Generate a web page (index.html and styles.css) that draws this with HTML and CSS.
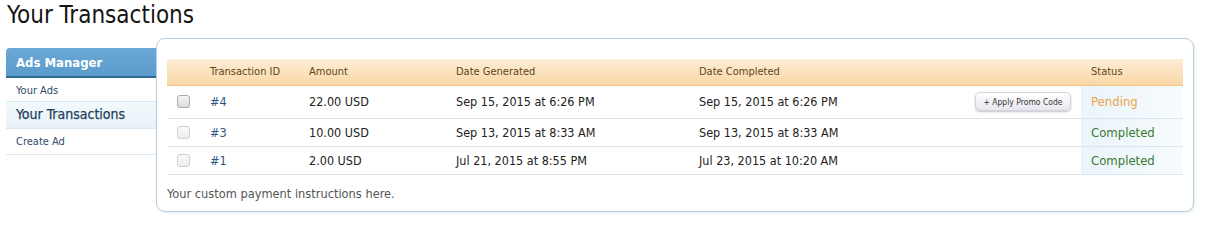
FILE: index.html
```html
<!DOCTYPE html>
<html>
<head>
<meta charset="utf-8">
<link rel="stylesheet" href="styles.css">
</head>
<body>
<h1 class="title">Your Transactions</h1>
<div class="layout">
  <nav class="sidebar">
    <div class="side-head">Ads Manager</div>
    <a class="side-link">Your Ads</a>
    <a class="side-link active">Your Transactions</a>
    <a class="side-link">Create Ad</a>
  </nav>
  <section class="panel">
    <table class="tx">
      <colgroup>
        <col class="c-check"><col class="c-id"><col class="c-amt"><col class="c-gen"><col class="c-comp"><col class="c-status">
      </colgroup>
      <thead>
        <tr><th></th><th>Transaction ID</th><th>Amount</th><th>Date Generated</th><th>Date Completed</th><th>Status</th></tr>
      </thead>
      <tbody>
        <tr class="r-tall">
          <td><span class="cb"></span></td>
          <td><a class="tid">#4</a></td>
          <td>22.00 USD</td>
          <td>Sep 15, 2015 at 6:26 PM</td>
          <td class="comp"><span>Sep 15, 2015 at 6:26 PM</span><button class="promo">+ Apply Promo Code</button></td>
          <td class="status pending">Pending</td>
        </tr>
        <tr>
          <td><span class="cb dis"></span></td>
          <td><a class="tid">#3</a></td>
          <td>10.00 USD</td>
          <td>Sep 13, 2015 at 8:33 AM</td>
          <td>Sep 13, 2015 at 8:33 AM</td>
          <td class="status done">Completed</td>
        </tr>
        <tr>
          <td><span class="cb dis"></span></td>
          <td><a class="tid">#1</a></td>
          <td>2.00 USD</td>
          <td>Jul 21, 2015 at 8:55 PM</td>
          <td>Jul 23, 2015 at 10:20 AM</td>
          <td class="status done">Completed</td>
        </tr>
      </tbody>
    </table>
    <p class="note">Your custom payment instructions here.</p>
  </section>
</div>
</body>
</html>
```

FILE: styles.css
```css
* { box-sizing: border-box; }
html, body { margin: 0; padding: 0; background: #fff; }
body {
  font-family: "DejaVu Sans Condensed", "DejaVu Sans", sans-serif;
  color: #222;
  width: 1205px;
  height: 221px;
  overflow: hidden;
}
.title {
  margin: 0;
  padding: 2px 0 0 7px;
  height: 38px;
  font-size: 24px;
  font-weight: normal;
  color: #151515;
  line-height: 26px;
}
.layout {
  display: flex;
  align-items: flex-start;
  padding-left: 6px;
}
.sidebar {
  width: 151px;
  margin-top: 10px;
  margin-right: -1px;
  display: flex;
  flex-direction: column;
}
.side-head {
  height: 30px;
  background: linear-gradient(#6aa8d6, #5b9bcb);
  border-bottom: 2px solid #2e6c92;
  border-radius: 4px 0 0 0;
  color: #fff;
  font-weight: bold;
  font-size: 13px;
  padding: 7px 0 0 10px;
}
.side-link {
  display: block;
  height: 24px;
  padding: 6px 0 0 10px;
  font-size: 11px;
  color: #2f4c6a;
  border-bottom: 1px solid #dbe9f2;
}
.side-link.active {
  height: 27px;
  padding-top: 4px;
  font-size: 14px;
  color: #243f5c;
  -webkit-text-stroke: 0.25px #243f5c;
  background: linear-gradient(#f3f9fc, #e8f3f9);
}
.side-link:last-child { height: 26px; }
.panel {
  position: relative;
  width: 1038px;
  height: 174px;
  border: 1px solid #b6cfdb;
  border-radius: 9px;
  background: #fff;
  padding: 20px 10px 0 10px;
  box-shadow: 1px 1px 2px rgba(150, 180, 200, 0.25);
}
.tx {
  width: 1016px;
  border-collapse: collapse;
  table-layout: fixed;
  font-size: 12.5px;
}
.c-check { width: 33px; }
.c-id { width: 99px; }
.c-amt { width: 147px; }
.c-gen { width: 243px; }
.c-comp { width: 392px; }
.c-status { width: 102px; }
.tx th {
  height: 26px;
  text-align: left;
  font-weight: normal;
  font-size: 11px;
  color: #5e4620;
  padding: 0 0 0 10px;
  background: linear-gradient(#fdedd6, #f9d7a6);
  border-bottom: 1px solid #efc58c;
}
.tx td {
  height: 28px;
  padding: 0 0 0 10px;
  border-bottom: 1px solid #d8e7ef;
  vertical-align: middle;
  white-space: nowrap;
}
.tx tr.r-tall td { height: 33px; }
.cb {
  display: block;
  width: 13px;
  height: 13px;
  border: 1px solid #a9a9a9;
  border-radius: 3px;
  background: linear-gradient(#f4f4f4, #dcdcdc);
}
.cb.dis {
  border-color: #cfcfcf;
  background: linear-gradient(#fafafa, #ececec);
}
.tid { color: #2b5783; }
.tx td.comp {
  display: flex;
  align-items: center;
  justify-content: space-between;
  padding-right: 10px;
}
.promo {
  width: 96px;
  height: 19px;
  border: 1px solid #d4d4de;
  border-radius: 5px;
  background: linear-gradient(#ffffff, #e7e7ef);
  box-shadow: 0 1px 2px rgba(80, 80, 110, 0.35);
  font-family: "DejaVu Sans Condensed", "DejaVu Sans", sans-serif;
  font-size: 8.5px;
  color: #333;
  padding: 0;
}
.tx td.status {
  background: linear-gradient(90deg, #eaf4fa, #f7fbfd);
  font-size: 13px;
}
.pending { color: #eba24a; }
.done { color: #3a7a32; }
.note {
  margin: 11px 0 0 0;
  font-size: 12.7px;
  color: #555;
}
```
